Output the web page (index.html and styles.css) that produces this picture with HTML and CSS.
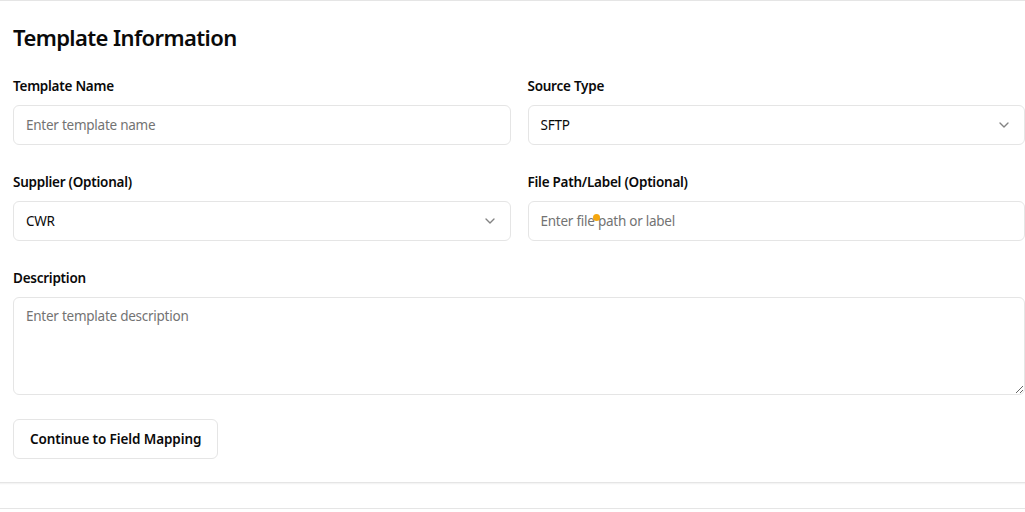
FILE: index.html
```html
<!DOCTYPE html>
<html lang="en">
<head>
<meta charset="utf-8">
<title>Template Information</title>
<link rel="stylesheet" href="styles.css">
</head>
<body>
<div class="page">
  <section class="card">
    <h2 class="card-title">Template Information</h2>
    <form class="form">
      <div class="grid">
        <div class="field">
          <label class="label">Template Name</label>
          <input class="input" type="text" placeholder="Enter template name">
        </div>
        <div class="field">
          <label class="label">Source Type</label>
          <div class="select">
            <span>SFTP</span>
            <svg class="chev" viewBox="0 0 24 24" width="16" height="16" fill="none" stroke="currentColor" stroke-width="2" stroke-linecap="round" stroke-linejoin="round"><path d="m6 9 6 6 6-6"/></svg>
          </div>
        </div>
        <div class="field">
          <label class="label">Supplier (Optional)</label>
          <div class="select">
            <span>CWR</span>
            <svg class="chev" viewBox="0 0 24 24" width="16" height="16" fill="none" stroke="currentColor" stroke-width="2" stroke-linecap="round" stroke-linejoin="round"><path d="m6 9 6 6 6-6"/></svg>
          </div>
        </div>
        <div class="field">
          <label class="label">File Path/Label (Optional)</label>
          <div class="input-wrap">
            <input class="input" type="text" placeholder="Enter file path or label">
            <span class="dot"></span>
          </div>
        </div>
      </div>
      <div class="field">
        <label class="label">Description</label>
        <textarea class="textarea" placeholder="Enter template description"></textarea>
      </div>
      <div class="actions">
        <button type="button" class="btn">Continue to Field Mapping</button>
      </div>
    </form>
  </section>
  <section class="card card-next"></section>
</div>
</body>
</html>
```

FILE: styles.css
```css
html, body {
  margin: 0;
  padding: 0;
  overflow: hidden;
  background: #ffffff;
}
body {
  font-family: "Noto Sans", "Open Sans", sans-serif;
  color: #0a0a0a;
}
.page {
  display: flex;
  flex-direction: column;
  gap: 25px;
  margin-left: -12px;
  width: 1062px;
}
.card {
  border: 1px solid #e5e5e5;
  border-radius: 8px;
  box-shadow: 0 1px 2px rgba(0,0,0,0.06);
  padding: 20px 24px 23px 24px;
  background: #fff;
}
.card-next {
  height: 40px;
  padding: 0;
}
.card-title {
  font-size: 22px;
  line-height: 32px;
  font-weight: 600;
  margin: 0 0 23px 0;
  letter-spacing: -0.6px;
}
.form {
  display: flex;
  flex-direction: column;
}
.grid {
  display: grid;
  grid-template-columns: 1fr 1fr;
  column-gap: 17px;
  row-gap: 27px;
  margin-bottom: 27px;
}
.field {
  display: flex;
  flex-direction: column;
}
.label {
  font-size: 13.5px;
  letter-spacing: -0.25px;
  line-height: 20px;
  font-weight: 600;
  margin-bottom: 9px;
}
.input, .select, .textarea {
  box-sizing: border-box;
  height: 40px;
  border: 1px solid #e5e5e5;
  border-radius: 6px;
  padding: 0 12px;
  font: inherit;
  font-size: 13.5px;
  letter-spacing: -0.25px;
  color: #0a0a0a;
  background: #fff;
  outline: none;
  width: 100%;
}
.input::placeholder, .textarea::placeholder {
  color: #737373;
  opacity: 1;
}
.select {
  display: flex;
  align-items: center;
  justify-content: space-between;
}
.chev {
  color: #0a0a0a;
  opacity: 0.5;
}
.input-wrap {
  position: relative;
}
.dot {
  position: absolute;
  left: 65px;
  top: 13px;
  width: 7px;
  height: 7px;
  border-radius: 50%;
  background: #f5a70f;
}
.textarea {
  height: 98px;
  padding: 8px 12px;
  line-height: 20px;
  resize: vertical;
  display: block;
}
.actions {
  margin-top: 24px;
  display: flex;
}
.btn {
  height: 40px;
  padding: 0 16px;
  border: 1px solid #e5e5e5;
  border-radius: 6px;
  background: #fff;
  font: inherit;
  font-size: 13.5px;
  letter-spacing: -0.1px;
  font-weight: 600;
  color: #0a0a0a;
}
```
